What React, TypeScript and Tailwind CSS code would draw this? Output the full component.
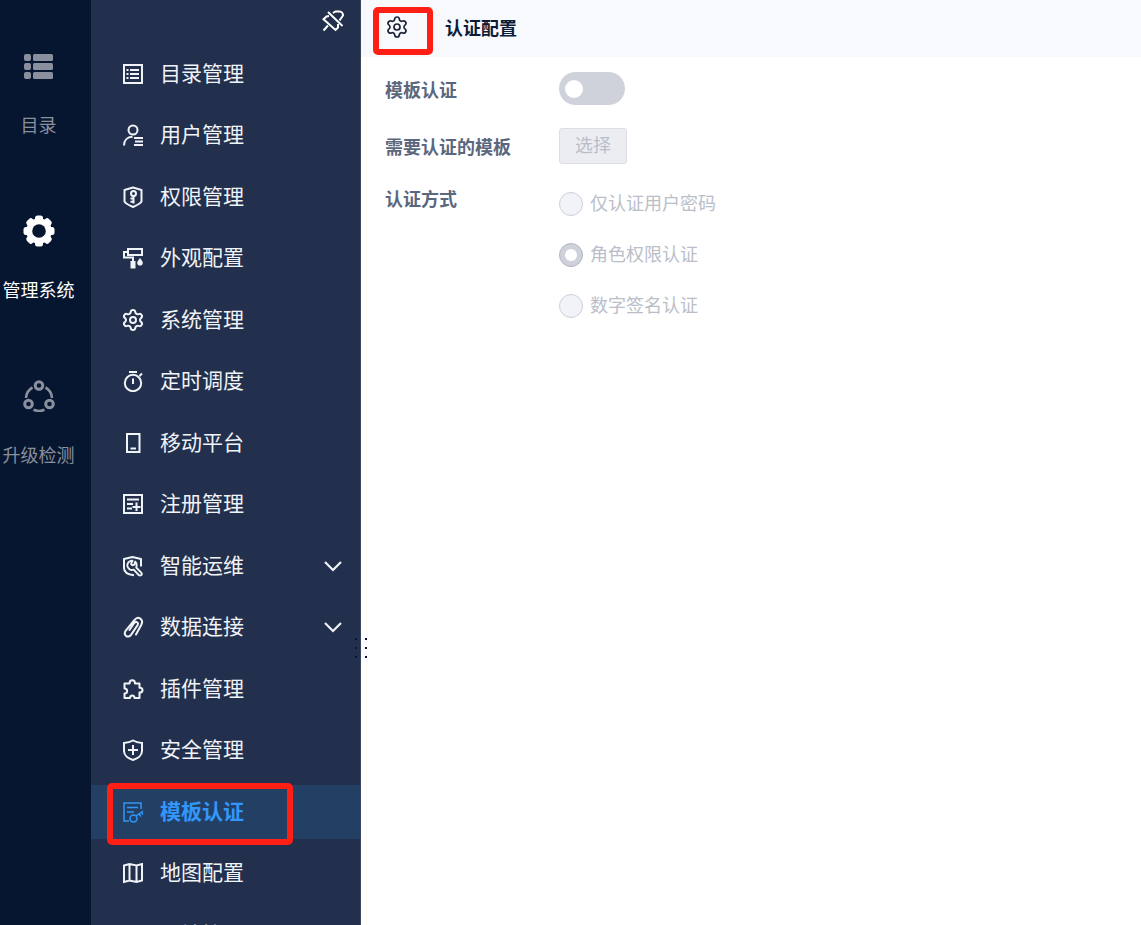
import type { ReactNode } from 'react';
import { Settings } from 'lucide-react';

interface MenuItem {
    label: string;
    icon: ReactNode;
    expandable?: boolean;
    active?: boolean;
}

function Icon({ children, thin }: { children?: ReactNode; thin?: boolean }) {
    return (
        <svg
            viewBox="0 0 22 22"
            className="w-[22px] h-[22px] shrink-0"
            fill="none"
            stroke="currentColor"
            strokeWidth={thin ? 1.5 : 2}
            aria-hidden="true"
        >
            {children}
        </svg>
    );
}

const menu: MenuItem[] = [
    {
        label: '目录管理',
        icon: (
            <Icon>
                <path d="M2 2h18v18H2z" />
                <path d="M4.5 7h2M8 7h9M4.5 11h2M8 11h9M4.5 15h2M8 15h9" />
            </Icon>
        ),
    },
    {
        label: '用户管理',
        icon: (
            <Icon>
                <circle cx="11" cy="6" r="4.5" />
                <path d="M2 21.5c0-5 3-8.5 8.5-8.7M12 14h9M13 17.5h8M12 21h9" />
            </Icon>
        ),
    },
    {
        label: '权限管理',
        icon: (
            <Icon>
                <path d="M11 1.5 19.5 4v11.5c-1.5 2.5-5 4-8.5 5.5-3.5-1.5-7-3-8.5-5.5V4z" strokeLinejoin="round" />
                <circle cx="11.5" cy="7.5" r="2.5" />
                <path d="M11.5 10v7.5M8.5 12.5h3M8.5 15.8h3" />
            </Icon>
        ),
    },
    {
        label: '外观配置',
        icon: (
            <Icon>
                <path d="M6 2h14v6H6zM6 5H2v5.5h9V14" />
                <path d="M8.5 14h5v7.5h-5z" fill="currentColor" stroke="none" />
                <path d="M18 11c1.5 2 2.8 3.5 2.8 4.8a2.8 2.8 0 0 1-5.600 0c0-1.300 1.300-2.800 2.800-4.800z" fill="currentColor" stroke="none" />
            </Icon>
        ),
    },
    { label: '系统管理', icon: <Settings size={24} className="-mx-px shrink-0" /> },
    {
        label: '定时调度',
        icon: (
            <Icon>
                <circle cx="11" cy="13" r="8.2" />
                <path d="M7 2h8M11 8.5V14M17.5 6 20 3.5" />
            </Icon>
        ),
    },
    {
        label: '移动平台',
        icon: (
            <Icon>
                <path d="M5 2h12.5v18H5zM8.5 16.5H14" />
            </Icon>
        ),
    },
    {
        label: '注册管理',
        icon: (
            <Icon>
                <path d="M2 2h18v18H2zM5 6.5h12M5 11h6M5 15.5h5M10.5 14h8M14.5 9.5V18" />
            </Icon>
        ),
    },
    {
        label: '智能运维',
        expandable: true,
        icon: (
            <Icon>
                <path d="M12 20.2C5.5 19.5 2 16.5 2 13V4l8.5-2 8.5 2v7.5" strokeLinejoin="round" />
                <path
                    d="M10.5 5.8a4.6 4.6 0 1 0 1.2 8.8l5 5.4c2 1.5 4-.5 2.5-2.3l-5-5.2c1-2.8.3-4.7-1-5.9l-.8 3-2 .8-1.4-1.6z"
                    strokeWidth="1.9"
                    strokeLinejoin="round"
                />
            </Icon>
        ),
    },
    {
        label: '数据连接',
        expandable: true,
        icon: (
            <Icon>
                <path
                    d="m14 18.5 5.2-9.5c3-6-3.2-9.5-6.7-5L3.8 14.5c-3 4.5 2 8.5 5.2 4.3l6.5-9.6c1.5-2.7-1.5-4.5-3.3-2.2L7.5 14"
                    strokeLinecap="round"
                />
            </Icon>
        ),
    },
    {
        label: '插件管理',
        icon: (
            <Icon>
                <path
                    d="M2.5 5.5h5C7.5 1 13 1 13 5.5h4.5v4.3c4 0 4 4.7 0 4.7V20h-5c0-3.5-4.5-3.5-4.5 0H2.5v-4.5c3.5 0 3.5-5 0-5z"
                    strokeLinejoin="round"
                />
            </Icon>
        ),
    },
    {
        label: '安全管理',
        icon: (
            <Icon>
                <path d="M11 1.5c2.5 1.5 5.5 2.3 9 2.5v8c0 4-4 7.5-9 9-5-1.5-9-5-9-9V4c3.5-.2 6.5-1 9-2.5zM11 6v10M6 11h10" />
            </Icon>
        ),
    },
    {
        label: '模板认证',
        active: true,
        icon: (
            <Icon thin>
                <path d="M7 20H2V2h17v6M5 6.5h11M5 11h7" />
                <circle cx="11.5" cy="17.5" r="3.5" />
                <path d="m14 15 7-5M17 13l2 2.5M19.5 11.5l1.5 2" />
            </Icon>
        ),
    },
    {
        label: '地图配置',
        icon: (
            <Icon>
                <path d="M2 3.5 7.5 2l7 1.5L20 2v16.5L14.5 20l-7-1.5L2 20zM7.5 2v16.5M14.5 3.5V20" />
            </Icon>
        ),
    },
    { label: '云端接入', icon: <Icon /> },
];

const railItems = [
    {
        label: '目录',
        active: false,
        icon: (
            <svg viewBox="0 0 32 32" className="w-8 h-8" fill="currentColor" aria-hidden="true">
                {[4, 13, 22].map((y) => (
                    <g key={y}>
                        <rect x="1" y={y} width="7" height="7" rx="2" />
                        <rect x="10" y={y} width="20" height="7" rx="1.5" />
                    </g>
                ))}
            </svg>
        ),
    },
    {
        label: '管理系统',
        active: true,
        icon: (
            <svg viewBox="0 0 32 32" className="w-8 h-8" aria-hidden="true">
                <g fill="currentColor">
                    {[0, 45, 90, 135].map((angle) => (
                        <rect key={angle} x="12" y="0.5" width="8" height="31" rx="2.5" transform={`rotate(${angle} 16 16)`} />
                    ))}
                    <circle cx="16" cy="16" r="12.8" />
                </g>
                <circle cx="16" cy="16" r="6.8" fill="#071630" />
            </svg>
        ),
    },
    {
        label: '升级检测',
        active: false,
        icon: (
            <svg viewBox="0 0 32 32" className="w-8 h-8" fill="none" stroke="currentColor" strokeWidth="3" aria-hidden="true">
                <circle cx="16" cy="5.5" r="3.8" />
                <circle cx="5.5" cy="24" r="3.8" />
                <circle cx="26.5" cy="24" r="3.8" />
                <path d="M9.5 7.5A13 13 0 0 0 3 18M22.5 7.5A13 13 0 0 1 29 18M10.5 29.8a14 14 0 0 0 11 0" strokeWidth="2.6" />
            </svg>
        ),
    },
];

const authModes = ['仅认证用户密码', '角色权限认证', '数字签名认证'];

function Rail() {
    return (
        <nav className="w-[91px] shrink-0 bg-[#071630] pr-[14px] pt-[50px]">
            <ul>
                {railItems.map((item) => (
                    <li key={item.label} className="h-[165px]">
                        <a
                            href="#"
                            className={`flex flex-col items-center gap-7 text-lg leading-7 whitespace-nowrap ${item.active ? 'text-white' : 'text-[#8a8f9e]'}`}
                        >
                            {item.icon}
                            {item.label}
                        </a>
                    </li>
                ))}
            </ul>
        </nav>
    );
}

function SideMenu() {
    return (
        <aside className="relative w-[270px] shrink-0 bg-[#22304d] border-r border-[#39445f] text-[#f0f3f8]">
            <div className="flex h-[47px] justify-end pt-[9px] pr-[15px]">
                <button type="button" aria-label="取消固定" className="h-6 w-6 text-white">
                    <svg viewBox="0 0 24 24" className="w-6 h-6" fill="none" stroke="currentColor" strokeWidth="2" aria-hidden="true">
                        <path d="m7 3 14.5 14M2.5 21.5l4.5-5M8 7l-2.5.5-3 2.8L14.5 21l2.5-2.5V15M12 4l2.5-1.5h4c2 0 3.5 2 3.5 4l-3.5 5" />
                    </svg>
                </button>
            </div>
            <ul>
                {menu.map((item) => (
                    <li
                        key={item.label}
                        className={`relative h-[54px] odd:mb-[7px] even:mb-2 ${item.active ? 'bg-[#243f64] text-[#3296fa] font-bold' : ''}`}
                    >
                        <a href="#" className="flex h-full items-center gap-4 pl-[31px] pr-[17px] text-[21px] leading-8">
                            {item.icon}
                            <span className="flex-1 pb-1">{item.label}</span>
                            {item.expandable && (
                                <svg viewBox="0 0 20 20" className="w-5 h-5" fill="none" stroke="currentColor" strokeWidth="2.2" aria-hidden="true">
                                    <path d="m2 6 8 8 8-8" />
                                </svg>
                            )}
                        </a>
                        {item.active && (
                            <div className="absolute -top-0.5 left-4 h-[62px] w-[186px] rounded-[5px] border-6 border-[#ff1f14]" />
                        )}
                    </li>
                ))}
            </ul>
            <div className="absolute top-[638px] -right-[7px] grid grid-cols-2 gap-x-2 gap-y-[7px]" aria-hidden="true">
                {[0, 1, 2, 3, 4, 5].map((dot) => (
                    <span key={dot} className="h-0.5 w-0.5 bg-[#0b1533]" />
                ))}
            </div>
        </aside>
    );
}

function AuthSettings() {
    return (
        <main className="min-w-0 flex-1 bg-white">
            <header className="flex h-[57px] items-center bg-[#f7f9fd] pl-3">
                <button
                    type="button"
                    aria-label="设置"
                    className="mt-[5px] flex h-12 w-[60px] items-start rounded-[5px] border-6 border-[#ff1f14] pl-[6px] pt-[2px] text-[#1b2437]"
                >
                    <Settings size={24} strokeWidth={1.7} />
                </button>
                <h1 className="ml-3 pb-1 text-lg leading-7 font-bold text-[#0d1c36]">认证配置</h1>
            </header>

            <form className="px-6 text-lg leading-7 text-[#b9bec9]">
                <div className="mt-[15px] flex items-center">
                    <label htmlFor="template-auth" className="w-[174px] shrink-0 font-bold text-[#5a677d]">
                        模板认证
                    </label>
                    <input
                        id="template-auth"
                        type="checkbox"
                        role="switch"
                        disabled
                        className="h-[33px] w-[66px] appearance-none rounded-full bg-[#cfd2da] pl-[6px] pt-2 before:block before:h-[18px] before:w-[18px] before:rounded-full before:bg-white"
                    />
                </div>

                <div className="mt-[23px] flex items-center">
                    <label htmlFor="template-pick" className="w-[174px] shrink-0 font-bold text-[#5a677d]">
                        需要认证的模板
                    </label>
                    <button
                        id="template-pick"
                        type="button"
                        disabled
                        className="flex h-9 w-[68px] items-center justify-center rounded-[3px] border border-[#dcdee5] bg-[#ebedf1] pb-1"
                    >
                        选择
                    </button>
                </div>

                <fieldset className="mt-5 flex">
                    <legend className="float-left w-[174px] shrink-0 font-bold text-[#5a677d]">认证方式</legend>
                    <div className="flex flex-col gap-[19px] pt-1">
                        {authModes.map((mode, index) => (
                            <label key={mode} className="flex items-center gap-[7px]">
                                <input
                                    type="radio"
                                    name="auth-mode"
                                    defaultChecked={index === 1}
                                    disabled
                                    className="h-6 w-6 appearance-none rounded-full border border-[#cdd0da] bg-[#f2f3f8] checked:border-[#b3b7c4] checked:bg-[#cfd2db] checked:p-[5px] checked:before:block checked:before:h-3 checked:before:w-3 checked:before:rounded-full checked:before:bg-white"
                                />
                                <span className="pb-1">{mode}</span>
                            </label>
                        ))}
                    </div>
                </fieldset>
            </form>
        </main>
    );
}

export default function App() {
    return (
        <div className="flex h-screen overflow-hidden font-['Noto_Sans_CJK_SC',sans-serif]">
            <Rail />
            <SideMenu />
            <AuthSettings />
        </div>
    );
}
